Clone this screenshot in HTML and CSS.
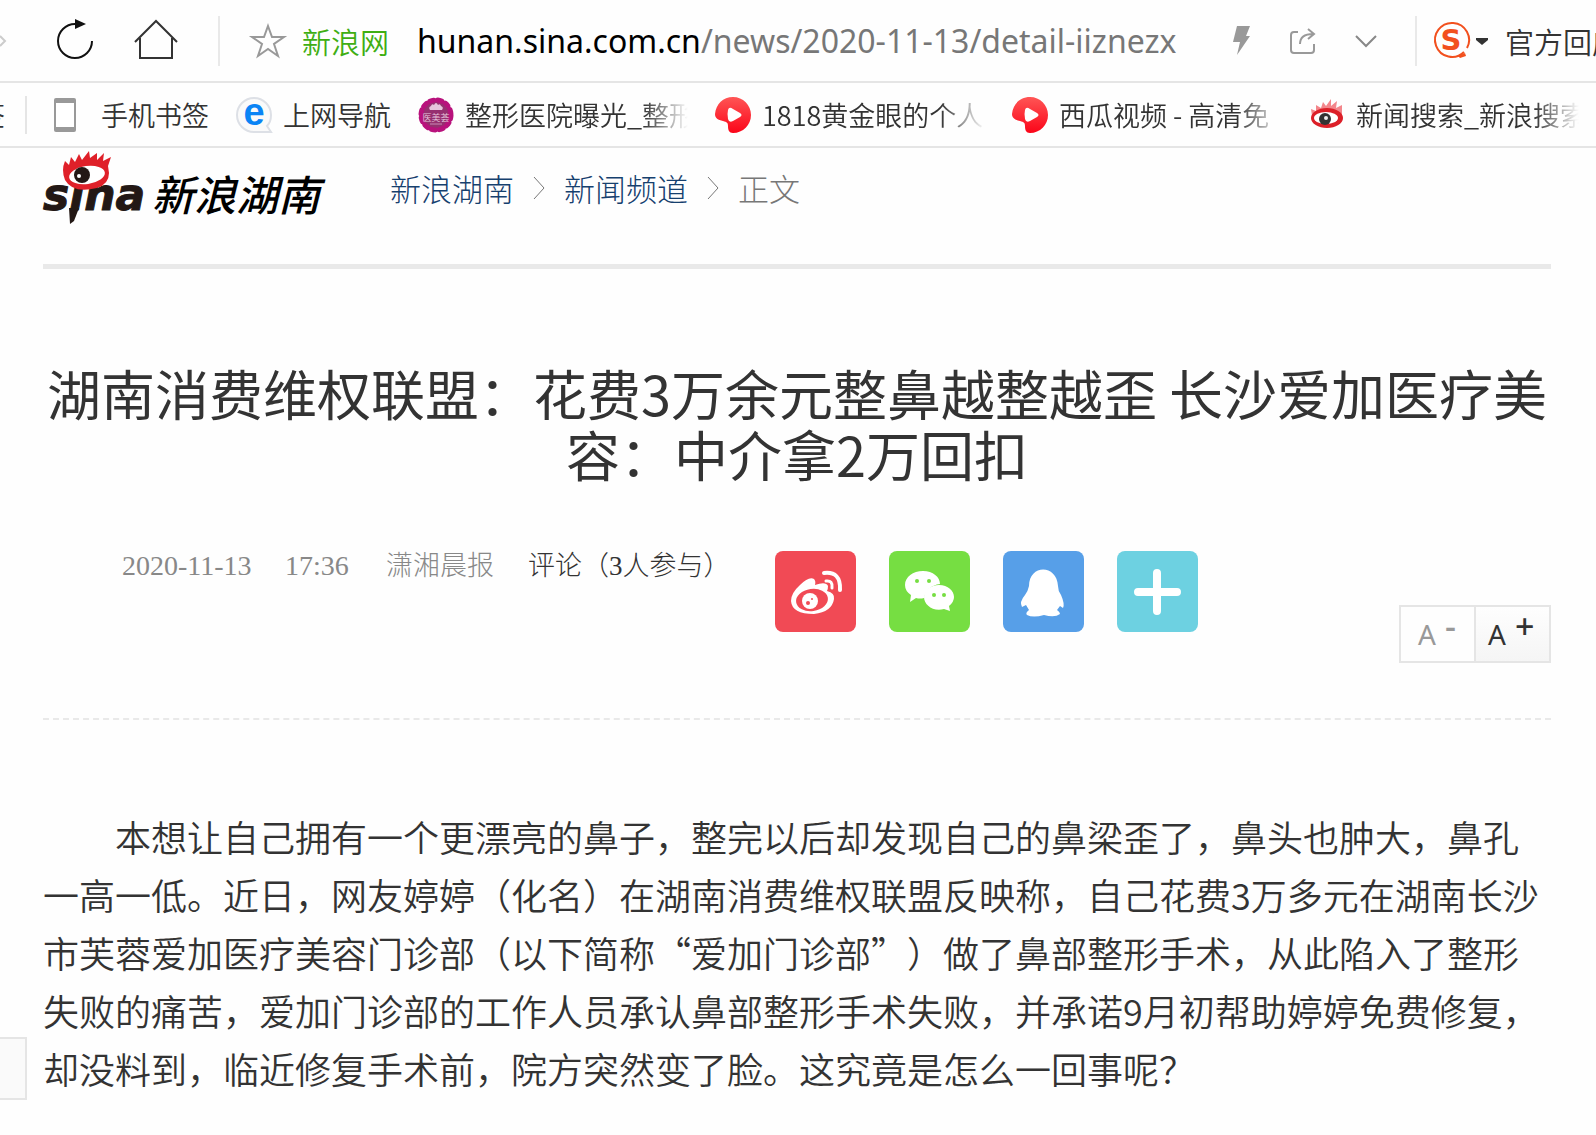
FILE: index.html
```
<!doctype html>
<html lang="zh-CN">
	<head>
		<meta charset="utf-8" />
		<meta name="viewport" content="width=device-width, initial-scale=1" />
		<title>湖南消费维权联盟：花费3万余元整鼻越整越歪 长沙爱加医疗美容：中介拿2万回扣</title>
		<link rel="stylesheet" href="styles.css">
	</head>
	<body>
		<!-- shared bookmark icon -->
		<svg class="defs" width="0" height="0" aria-hidden="true">
			<defs>
				<linearGradient id="red" x1="0" y1="0" x2="0" y2="1">
					<stop offset="0" stop-color="#ff5555" />
					<stop offset="1" stop-color="#fb0519" />
				</linearGradient>
				<symbol id="xigua" viewBox="0 0 36 36">
					<path fill="url(#red)" d="M18 0C28 0 36 8 36 18C36 28 28 36 18 36C14 36 13 33 13 29C13 26 12 25 8 24C3 23 0 21 0 17C1 7 8 0 18 0Z" />
					<path fill="#fff" d="M13 13Q14 9 18 12L25 16Q28 18 25 20L18 24Q14 26 13 22Q12 17 13 13Z" />
				</symbol>
			</defs>
		</svg>

		<div class="toolbar">
			<div class="nav">
				<button title="前进" class="forward">
					<svg width="6" height="14" viewBox="0 0 6 14"><path d="M0 2L5 7L0 12" fill="none" stroke="#ccc" stroke-width="2" /></svg>
				</button>
				<button title="刷新">
					<svg width="38" height="42" viewBox="0 0 38 42"><path d="M36 21A17 17 0 1 1 19 4H22" fill="none" stroke="#111" stroke-width="2" /><path d="M19 -1L30 4L19 9Z" fill="#111" /></svg>
				</button>
				<button title="主页">
					<svg width="44" height="42" viewBox="0 0 44 42"><path d="M1 22L22 1L43 22M6 18V38H38V18" fill="none" stroke="#333" stroke-width="2" /></svg>
				</button>
			</div>
			<div class="address">
				<button title="收藏">
					<svg width="36" height="36" viewBox="0 0 36 36"><path d="M18 3L22 14H34L24 21L28 33L18 26L8 33L12 21L2 14H14Z" fill="none" stroke="#999" stroke-width="2" /></svg>
				</button>
				<span class="site">新浪网</span>
				<a class="url" href="#"><b>hunan.sina.com.cn</b>/news/2020-11-13/detail-iiznezx</a>
			</div>
			<div class="tools">
				<button title="极速模式">
					<svg width="18" height="30" viewBox="0 0 18 30"><path d="M4 0H17L13 10H17L4 29L7 16H0Z" fill="#999" /></svg>
				</button>
				<button title="分享">
					<svg width="28" height="28" viewBox="0 0 28 28"><path d="M9 5H5Q2 5 2 8V23Q2 26 5 26H22Q25 26 25 23V17M11 17Q11 7 24 7M19 2L25 7L19 12" fill="none" stroke="#999" stroke-width="2" /></svg>
				</button>
				<button title="更多">
					<svg width="22" height="14" viewBox="0 0 22 14"><path d="M1 2L11 12L21 2" fill="none" stroke="#888" stroke-width="2" /></svg>
				</button>
			</div>
			<div class="search">
				<button title="搜狗搜索">
					<svg width="56" height="38" viewBox="0 0 56 38">
						<path d="M31 30A17 17 0 1 1 34 26" fill="none" stroke="#f2501e" stroke-width="2" />
						<path d="M25 34L32 31L33 34L27 36Z" fill="#f2501e" />
						<text x="18" y="28" class="sogou">S</text>
						<path d="M43 16H55V18L49 23L43 18Z" fill="#333" />
					</svg>
				</button>
				<span>官方回应</span>
			</div>
		</div>

		<div class="bookmarks">
			<span class="cut">签</span>
			<a href="#" class="phone">
				<svg width="22" height="34" viewBox="0 0 22 34"><rect width="22" height="34" rx="2" fill="#999" /><rect x="2" y="5" width="18" height="24" fill="#fff" /></svg>
				<span>手机书签</span>
			</a>
			<a href="#">
				<svg width="36" height="36" viewBox="0 0 36 36"><path d="M35 35H18A17 17 0 1 1 35 18Q35 25 31 29Z" fill="#fafafa" stroke="#dde0e6" stroke-width="2" /><text x="18" y="28" class="ie">e</text></svg>
				<span>上网导航</span>
			</a>
			<a href="#">
				<svg width="36" height="36" viewBox="0 0 36 36">
					<circle cx="18" cy="18" r="15" fill="#963070" stroke="#b8127c" stroke-width="5" stroke-dasharray="4 4" stroke-linecap="round" />
					<path d="M12 13Q10 10 13 9Q14 6 16 8Q18 4 20 8Q22 6 23 9Q26 10 24 13Z" fill="#e6c4dc" />
					<text x="18" y="24" class="seal">医美荟</text>
					<path d="M12 27H24" stroke="#c889b3" />
				</svg>
				<span class="long">整形医院曝光_整形</span>
			</a>
			<a href="#">
				<svg width="36" height="36"><use href="#xigua" /></svg>
				<span class="long">1818黄金眼的个人</span>
			</a>
			<a href="#">
				<svg width="36" height="36"><use href="#xigua" /></svg>
				<span class="long">西瓜视频 - 高清免</span>
			</a>
			<a href="#">
				<svg width="36" height="36" viewBox="0 0 36 36">
					<path d="M3 19L2 12L7 14L7 8L12 11L14 5L17 9L22 2L22 9L28 4L27 11L33 8L33 20Z" fill="#f3868b" />
					<ellipse cx="18" cy="21" rx="16" ry="10" fill="#dc1f28" />
					<ellipse cx="17" cy="21" rx="12" ry="6" fill="#fff" />
					<circle cx="16" cy="22" r="6" fill="#333" />
					<circle cx="17" cy="21" r="2" fill="#eee" />
				</svg>
				<span class="long">新闻搜索_新浪搜索</span>
			</a>
		</div>

		<div class="page">
			<div class="header">
				<a href="#" title="新浪湖南">
					<svg class="logo" width="282" height="76" viewBox="0 0 282 76">
						<text x="0" y="62" class="sina">sina</text>
						<path d="M26 60H36L31 73L27 76Z" fill="#231815" />
						<path d="M22 32Q18 22 22 13L26 17L28 9L32 14L36 6L39 12L46 3L47 10L54 5L54 12L61 5L60 13L68 9L65 18L66 25Q66 36 54 40Q30 46 22 32Z" fill="#df2029" />
						<ellipse cx="44" cy="27" rx="18" ry="9" fill="#fff" transform="rotate(-8 44 27)" />
						<circle cx="39" cy="27" r="8" fill="#231815" />
						<circle cx="36" cy="28" r="2" fill="#fff" />
						<text x="109" y="63" class="hunan">新浪湖南</text>
					</svg>
				</a>
				<div class="crumbs">
					<a href="#">新浪湖南</a>
					<svg width="12" height="24" viewBox="0 0 12 24"><path d="M1 1L11 12L1 23" fill="none" stroke="#777" /></svg>
					<a href="#">新闻频道</a>
					<svg width="12" height="24" viewBox="0 0 12 24"><path d="M1 1L11 12L1 23" fill="none" stroke="#777" /></svg>
					<span>正文</span>
				</div>
			</div>

			<h1>湖南消费维权联盟：花费3万余元整鼻越整越歪 长沙爱加医疗美容：中介拿2万回扣</h1>

			<div class="info">
				<div class="source">
					<span class="date">2020-11-13</span>
					<span class="time">17:36</span>
					<span class="media">潇湘晨报</span>
					<a href="#">评论（<b>3</b>人参与）</a>
				</div>
				<div class="share">
					<button class="weibo" title="分享到微博">
						<svg width="81" height="81" viewBox="0 0 81 81">
							<path d="M16 50Q16 42 25 34Q34 25 39 28Q41 30 40 34Q51 30 53 35Q53 38 52 40Q60 42 59 48Q57 61 39 63Q17 63 16 50Z" fill="#fff" />
							<ellipse cx="37" cy="49" rx="16" ry="11" fill="#f14a55" transform="rotate(-8 37 49)" />
							<circle cx="35" cy="50" r="8" fill="#fff" />
							<circle cx="33" cy="52" r="2" fill="#f14a55" /><circle cx="37" cy="48" r="1" fill="#f14a55" />
							<path d="M49 22Q66 20 65 39" fill="none" stroke="#fff" stroke-width="4" stroke-linecap="round" />
							<path d="M51 30Q58 29 57 37" fill="none" stroke="#fff" stroke-width="3" stroke-linecap="round" />
						</svg>
					</button>
					<button class="wechat" title="分享到微信">
						<svg width="81" height="81" viewBox="0 0 81 81">
							<path d="M34 20C44 20 51 26 51 33C42 34 36 40 35 47Q31 48 27 47L21 51L22 44Q16 40 16 34C16 26 24 20 34 20Z" fill="#fff" />
							<path d="M50 34C59 34 65 40 65 46Q65 51 60 55L61 60L55 58C44 61 35 54 35 46C35 39 42 34 50 34Z" fill="#fff" />
							<g fill="#76de42"><circle cx="28" cy="30" r="2" /><circle cx="40" cy="30" r="2" /><circle cx="45" cy="44" r="2" /><circle cx="55" cy="44" r="2" /></g>
						</svg>
					</button>
					<button class="qq" title="分享到QQ">
						<svg width="81" height="81" viewBox="0 0 81 81">
							<path d="M26 35C26 13 54 13 55 35Q55 40 58 44Q62 53 60 57L57 55L54 59Q57 61 57 63Q52 67 41 64Q30 67 24 64Q22 62 26 59L23 54L19 56Q16 51 22 44Q25 40 26 35Z" fill="#fff" />
						</svg>
					</button>
					<button class="more" title="更多分享">
						<svg width="81" height="81" viewBox="0 0 81 81"><path d="M40 22V60M21 41H60" stroke="#fff" stroke-width="8" stroke-linecap="round" /></svg>
					</button>
				</div>
				<div class="fontsize">
					<button class="smaller" title="缩小字号">A<sup>-</sup></button>
					<button class="bigger" title="放大字号">A<sup>+</sup></button>
				</div>
			</div>

			<p>本想让自己拥有一个更漂亮的鼻子，整完以后却发现自己的鼻梁歪了，鼻头也肿大，鼻孔一高一低。近日，网友婷婷（化名）在湖南消费维权联盟反映称，自己花费3万多元在湖南长沙市芙蓉爱加医疗美容门诊部（以下简称“爱加门诊部”）做了鼻部整形手术，从此陷入了整形失败的痛苦，爱加门诊部的工作人员承认鼻部整形手术失败，并承诺9月初帮助婷婷免费修复，却没料到，临近修复手术前，院方突然变了脸。这究竟是怎么一回事呢？</p>
		</div>

		<div class="sidetab"></div>
	</body>
</html>
```
FILE: styles.css
```
body {
	margin: 0;
	background-color: #fefefe;
	color: #333;
	font-family: "Noto Sans CJK SC", sans-serif;
	font-weight: 350;
	text-spacing-trim: space-all;
	overflow-x: hidden;
}
a {
	color: inherit;
	text-decoration: none;
}
button {
	padding: 0;
	border: 0;
	background: none;
	color: inherit;
	font: inherit;
	cursor: pointer;
}
svg {
	display: block;
	flex: none;
	overflow: visible;
}
.defs {
	position: absolute;
}

/* browser bars */
.toolbar {
	display: flex;
	align-items: center;
	height: 81px;
	border-bottom: 2px solid #e5e5e5;
	font-size: 29px;
	white-space: nowrap;
}
.nav, .address, .tools, .search {
	display: flex;
	align-items: center;
	height: 50px;
}
.nav {
	gap: 40px;
	padding-right: 40px;
	border-right: 2px solid #e9e9e9;
}
.forward {
	margin-right: 10px;
}
.address {
	flex: 1;
	padding-left: 30px;
}
.site {
	margin: 0 28px 0 16px;
	color: #3fae13;
}
.url {
	color: #777;
	font-family: "Noto Sans", sans-serif;
	font-size: 32px;
	font-weight: 400;
}
.url b {
	color: #000;
	font-weight: 400;
}
.tools {
	gap: 38px;
	padding-right: 38px;
	border-right: 2px solid #e9e9e9;
}
.search {
	gap: 16px;
	width: 163px;
	padding-left: 16px;
	overflow: hidden;
}
.sogou {
	fill: #f2501e;
	font: bold 29px "DejaVu Sans", sans-serif;
	text-anchor: middle;
}
.bookmarks {
	display: flex;
	align-items: center;
	gap: 27px;
	height: 63px;
	border-bottom: 2px solid #e5e5e5;
	font-size: 27px;
	line-height: 38px;
	white-space: nowrap;
}
.bookmarks a {
	display: flex;
	align-items: center;
	gap: 11px;
}
.bookmarks a.phone {
	gap: 25px;
}
.cut {
	display: flex;
	justify-content: flex-end;
	width: 27px;
	padding-right: 20px;
	box-sizing: border-box;
	border-right: 2px solid #e5e5e5;
	overflow: hidden;
}
.long {
	width: 223px;
	-webkit-mask-image: linear-gradient(to right, #000 80%, transparent);
	mask-image: linear-gradient(to right, #000 80%, transparent);
}
.ie {
	fill: #0a84f5;
	font: bold 38px "Liberation Sans", sans-serif;
	text-anchor: middle;
}
.seal {
	fill: #e6c4dc;
	font-size: 9px;
	text-anchor: middle;
}

/* article */
.page {
	padding: 0 45px 0 43px;
}
.header {
	display: flex;
	align-items: flex-start;
	gap: 65px;
	height: 116px;
	border-bottom: 5px solid #e9e9e9;
}
.sina {
	fill: #231815;
	stroke: #231815;
	font: italic bold 44px "DejaVu Sans", sans-serif;
}
.hunan {
	font-size: 42px;
	font-style: italic;
	font-weight: 500;
}
.crumbs {
	display: flex;
	align-items: center;
	gap: 19px;
	padding-top: 18px;
	color: #777;
	font-size: 31px;
	font-weight: 300;
	line-height: 44px;
}
.crumbs a {
	color: #16406e;
}
h1 {
	margin: 93px 0 67px;
	font-size: 54px;
	font-weight: 400;
	line-height: 61px;
	text-align: center;
}
.info {
	display: flex;
	align-items: flex-start;
	padding: 0 0 55px 79px;
	border-bottom: 2px dashed #e9e9e9;
}
.source {
	display: flex;
	align-items: baseline;
	color: #888;
	font-family: "Liberation Serif", "Noto Sans CJK SC", serif;
	font-size: 27px;
	font-weight: 300;
	line-height: 30px;
	white-space: nowrap;
}
.date {
	width: 163px;
	font-size: 28px;
}
.time {
	width: 101px;
	font-size: 28px;
}
.media {
	width: 142px;
}
.source a {
	width: 247px;
	color: #333;
}
.share {
	display: flex;
	gap: 33px;
}
.share button {
	border-radius: 8px;
}
.weibo {
	background-color: #f14a55;
}
.wechat {
	background-color: #76de42;
}
.qq {
	background-color: #579fe8;
}
.more {
	background-color: #6dd1e1;
}
.fontsize {
	display: flex;
	margin: 54px 0 0 auto;
}
.fontsize button {
	width: 77px;
	height: 58px;
	padding-left: 12px;
	border: 2px solid #e5e5e5;
	font-family: "Noto Sans", sans-serif;
	font-size: 28px;
	font-weight: 400;
	line-height: 54px;
	text-align: left;
}
.fontsize sup {
	margin-left: 9px;
	font-size: 34px;
	font-weight: 500;
	line-height: 0;
	vertical-align: 6px;
}
.fontsize .smaller {
	margin-right: -2px;
	padding-left: 17px;
	color: #999;
}
.bigger {
	background: linear-gradient(#fefefe, #f5f5f5);
}
p {
	margin: 87px 0 36px;
	font-size: 36px;
	line-height: 58px;
	text-indent: 2em;
}

/* floats at the window's edge */
.sidetab {
	position: fixed;
	bottom: 35px;
	left: 0;
	width: 25px;
	height: 59px;
	border: 2px solid #e5e5e5;
	border-left: 0;
	background-color: #fafafa;
}
```
